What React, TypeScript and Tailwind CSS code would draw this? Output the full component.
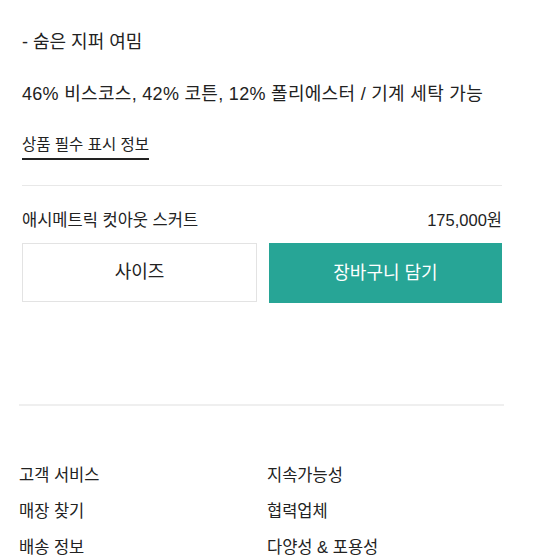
import React from "react";

export default function App() {
  const font = { fontFamily: '"Liberation Sans", "Noto Sans CJK KR", sans-serif' };
  return (
    <div className="w-[555px] h-[555px] overflow-hidden bg-white text-[#222]" style={font}>
      <div className="ml-[22px] w-[480px] flex flex-col">
        <div className="h-[30px]" />
        <p className="text-[18px] leading-[24px]">- 숨은 지퍼 여밈</p>
        <p className="mt-[28px] text-[18px] tracking-[0.3px] leading-[24px] whitespace-nowrap">46% 비스코스, 42% 코튼, 12% 폴리에스터 / 기계 세탁 가능</p>
        <div className="mt-[27px]">
          <span className="inline-block text-[15.5px] leading-[20px] pb-[3px] border-b-2 border-[#222]">상품 필수 표시 정보</span>
        </div>
        <div className="mt-[25px] h-px bg-[#e8e8e8]" />
        <div className="mt-[23px] flex justify-between items-center text-[16.5px] leading-[22px]">
          <span>애시메트릭 컷아웃 스커트</span>
          <span>175,000원</span>
        </div>
        <div className="mt-[12px] flex gap-[12px]">
          <button className="flex-1 h-[59px] border border-[#e3e3e3] bg-white text-[18px] text-[#222]">사이즈</button>
          <button className="flex-1 h-[60px] bg-[#27a596] text-[18px] text-white">장바구니 담기</button>
        </div>
      </div>
      <div className="ml-[19px] w-[485px] mt-[101px] h-[2px] bg-[#efefef]" />
      <div className="ml-[19px] mt-[57px] grid grid-cols-[248px_1fr] w-[485px] gap-y-[12px] text-[16.5px] leading-[24px]">
        <span>고객 서비스</span>
        <span>지속가능성</span>
        <span>매장 찾기</span>
        <span>협력업체</span>
        <span>배송 정보</span>
        <span>다양성 &amp; 포용성</span>
      </div>
    </div>
  );
}
